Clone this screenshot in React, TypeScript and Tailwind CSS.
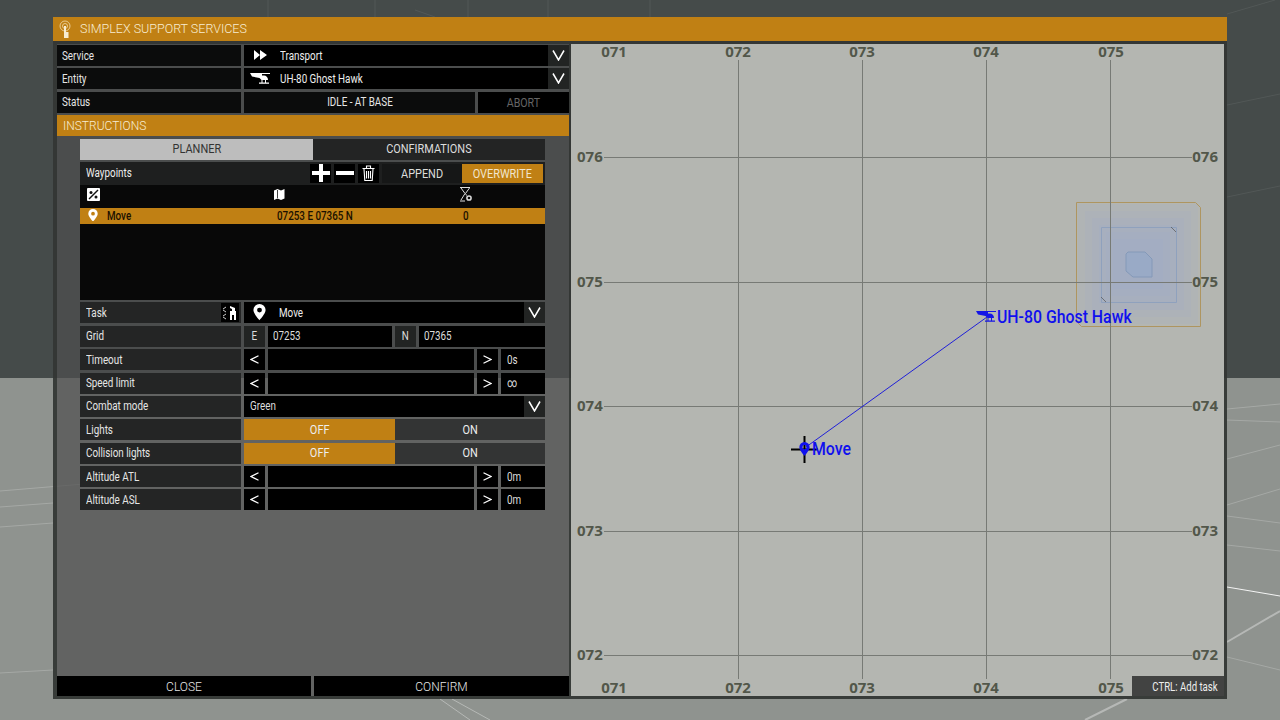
import type { ReactNode } from "react";

const orange = "bg-[#c08014]";
// the game font is condensed, Roboto gets squeezed to fit
const nl = "inline-block origin-left scale-x-[0.82] whitespace-nowrap";
const nc = "inline-block origin-center scale-x-[0.82] whitespace-nowrap";
const nu = "inline-block origin-center scale-x-[0.84] whitespace-nowrap";

function Pin({ color = "white", size = 14 }: { color?: string; size?: number }) {
  return (
    <svg width={size} height={size * 1.25} viewBox="0 0 16 20" className="block">
      <path fillRule="evenodd" fill={color} d="M8 0a7.500 7.500 0 0 0-7.500 7.500c0 4.500 7.500 12.500 7.500 12.500s7.500-8 7.500-12.500a7.500 7.500 0 0 0-7.500-7.500zm0 4.500a3 3 0 1 1 0 6a3 3 0 0 1 0-6z" />
    </svg>
  );
}

function Heli({ color = "white", className = "" }: { color?: string; className?: string }) {
  return (
    <svg width="20" height="11" viewBox="0 0 20 11" className={className}>
      <path fill={color} d="M0 0h20v1h-8v1.500h2c2 0 4 1.500 4 4.500h-6.500l-2-2l-7.500-1.500l-2-3.500zM9 9.500h10v1.200h-10z" />
      <path fill={color} d="M11.500 7h1v3h-1zM15 7h1v3h-1z" />
    </svg>
  );
}

function Chevron() {
  return (
    <svg width="13" height="11" viewBox="0 0 13 11">
      <path d="M1 .5l5.500 9.500l5.500-9.500" fill="none" stroke="white" strokeWidth="1.500" />
    </svg>
  );
}

function Arrow({ flip }: { flip?: boolean }) {
  return (
    <svg width="9" height="9" viewBox="0 0 9 9" className={flip ? "rotate-180" : ""}>
      <path d="M8.500 .8L1 4.500l7.500 3.700" fill="none" stroke="white" strokeWidth="1.200" />
    </svg>
  );
}

function DropBtn() {
  return (
    <div className="w-[21px] h-full bg-[#222423] flex items-center justify-center shrink-0">
      <Chevron />
    </div>
  );
}

function Label({ children }: { children: ReactNode }) {
  return (
    <div className="w-[161px] shrink-0 h-full flex items-center pl-[6px] text-[#e6e6e6] bg-[#242525]">
      <span className={nl}>{children}</span>
    </div>
  );
}

function TopLabel({ children }: { children: ReactNode }) {
  return (
    <div className="w-[184px] shrink-0 h-full flex items-center pl-[5px] text-[#e6e6e6] bg-[#0b0c0c]">
      <span className={nl}>{children}</span>
    </div>
  );
}

function SliderRow({ label, value }: { label: string; value: string }) {
  return (
    <div className="flex h-[21px] gap-[3px]">
      <Label>{label}</Label>
      <div className="w-[21px] bg-black flex items-center justify-center"><Arrow /></div>
      <div className="w-[206px] bg-black" />
      <div className="w-[21px] bg-black flex items-center justify-center"><Arrow flip /></div>
      <div className="flex-1 bg-black flex items-center pl-[6px] text-[#ddd]"><span className={nl}>{value}</span></div>
    </div>
  );
}

function Toggle({ label }: { label: string }) {
  return (
    <div className="flex h-[21px] gap-[3px]">
      <Label>{label}</Label>
      <div className="flex flex-1 text-[13px] text-[#eee]">
        <div className={`w-[151px] ${orange} flex items-center justify-center`}><span className={nu}>OFF</span></div>
        <div className="flex-1 bg-[#333434] flex items-center justify-center"><span className={nu}>ON</span></div>
      </div>
    </div>
  );
}

const xLabels = [
  { t: "071", x: 614 },
  { t: "072", x: 738 },
  { t: "073", x: 862 },
  { t: "074", x: 986 },
  { t: "075", x: 1111 },
];
const yLabels = [
  { t: "076", y: 157 },
  { t: "075", y: 282 },
  { t: "074", y: 406 },
  { t: "073", y: 531 },
  { t: "072", y: 655 },
];
const mapNum = "absolute text-[15px] font-bold leading-[20px] text-[#52574a]";

function GameMap() {
  return (
    <div className="relative w-[653px] h-[652px] bg-[#b4b6b1] font-['Noto_Sans',sans-serif]">
      <svg width="653" height="652" viewBox="571 44 653 652" className="absolute inset-0">
        {[60, 53, 46, 39, 32, 25].map((r) => (
          <rect key={r} x={1138 - r} y={264 - r} width={r * 2} height={r * 2} fill="#8fa8d4" fillOpacity="0.1" />
        ))}
        <path d="M1076.500 202.500h119l5 5v119h-119l-5-5z" fill="none" stroke="#ae9560" strokeWidth="1" />
        <path d="M1101.500 227.500h75v75h-75z" fill="none" stroke="#8fa1bd" strokeWidth="1" />
        <path d="M1171 227l5 5M1101 297l5 5" stroke="#555" strokeWidth="0.700" />
        <path d="M1128 252h17l7 7v18h-19l-7-6v-17z" fill="#92a8c8" fillOpacity="0.6" stroke="#8499b8" strokeWidth="1" />
        {[738, 862, 986, 1110].map((x) => (
          <line key={x} x1={x + 0.5} x2={x + 0.5} y1="60" y2="679" stroke="#777a75" strokeWidth="1" />
        ))}
        {[157, 282, 406, 531, 655].map((y) => (
          <line key={y} y1={y + 0.5} y2={y + 0.5} x1="604" x2="1192" stroke="#777a75" strokeWidth="1" />
        ))}
        <line x1="806" y1="447" x2="987" y2="317" stroke="#2020d8" strokeWidth="1" />
        <path d="M804.500 436v27M791 449.500h27" stroke="black" strokeWidth="2" />
      </svg>
      {xLabels.map((l) => (
        <div key={l.t}>
          <span className={`${mapNum} top-[-3px] w-[34px] ml-[-17px] text-center`} style={{ left: l.x - 571 }}>{l.t}</span>
          <span className={`${mapNum} top-[633px] w-[34px] ml-[-17px] text-center`} style={{ left: l.x - 571 }}>{l.t}</span>
        </div>
      ))}
      {yLabels.map((l) => (
        <div key={l.y}>
          <span className={`${mapNum} left-[6px]`} style={{ top: l.y - 44 - 11 }}>{l.t}</span>
          <span className={`${mapNum} right-[6px]`} style={{ top: l.y - 44 - 11 }}>{l.t}</span>
        </div>
      ))}
      <Heli color="#1414e6" className="absolute left-[405px] top-[267px]" />
      <span className="absolute left-[426px] top-[262px] text-[18px] leading-[22px] text-[#1010ee] font-['Roboto',sans-serif] font-medium whitespace-nowrap origin-left scale-x-[0.88]">UH-80 Ghost Hawk</span>
      <div className="absolute left-[228px] top-[398px]"><Pin color="#1010ee" size={11} /></div>
      <span className="absolute left-[241px] top-[394px] text-[18px] leading-[22px] text-[#1010ee] font-['Roboto',sans-serif] font-medium origin-left scale-x-[0.88]">Move</span>
      <div className="absolute right-0 bottom-0 w-[92px] h-[20px] bg-[#424342] flex items-center justify-end pr-[6px] pt-[1px] text-[12px] text-[#eee] font-['Roboto',sans-serif]">
        <span className="inline-block origin-right scale-x-[0.8] whitespace-nowrap">CTRL: Add task</span>
      </div>
    </div>
  );
}

function Planner() {
  return (
    <div className="ml-[23px] mr-[24px] flex flex-col gap-[2.400px]">
      <div className="flex h-[21px] text-[13px]">
        <div className="w-[233px] bg-[#bdbdbd] text-[#333] flex items-center justify-center"><span className={nu}>PLANNER</span></div>
        <div className="flex-1 bg-[#232424] text-[#ddd] flex items-center justify-center"><span className={nu}>CONFIRMATIONS</span></div>
      </div>
      <div className="flex flex-col">
        <div className="h-[23px] bg-[#1e1f1f] flex items-center pl-[6px] text-[#eee]">
          <span className={`${nl} flex-1`}>Waypoints</span>
          <div className="flex gap-[3px] items-center mr-[3px]">
            <div className="w-[21px] h-[19px] bg-black flex items-center justify-center">
              <svg width="18" height="18" viewBox="0 0 18 18"><path d="M7 0h4v7h7v4h-7v7h-4v-7h-7v-4h7z" fill="white" /></svg>
            </div>
            <div className="w-[21px] h-[19px] bg-black flex items-center justify-center">
              <svg width="18" height="4" viewBox="0 0 18 4"><rect width="18" height="4" fill="white" /></svg>
            </div>
            <div className="w-[21px] h-[19px] bg-black flex items-center justify-center">
              <svg width="13" height="16" viewBox="0 0 13 16">
                <path d="M.5 3.500h12M4.500 3V1h4v2M2 4l.8 11.500h7.400L11 4M4.500 6v7.500M6.500 6v7.500M8.500 6v7.500" fill="none" stroke="white" strokeWidth="1.100" />
              </svg>
            </div>
          </div>
          <div className="w-[80px] h-[19px] bg-[#161717] text-[13px] flex items-center justify-center text-[#ddd]"><span className={nu}>APPEND</span></div>
          <div className={`w-[81px] h-[19px] mr-[2px] ${orange} text-[13px] flex items-center justify-center text-[#f1e6cf]`}><span className={nu}>OVERWRITE</span></div>
        </div>
        <div className="h-[115px] bg-[#080808] flex flex-col">
          <div className="h-[23px] relative shrink-0">
            <svg width="14" height="14" viewBox="0 0 14 14" className="absolute left-[7px] top-[3px]">
              <rect width="13" height="13" rx="1" fill="white" />
              <path d="M2 11L11 2" stroke="#111" strokeWidth="1.500" />
              <circle cx="4" cy="4.500" r="1.500" fill="#111" />
              <circle cx="9" cy="9" r="1.500" fill="#111" />
            </svg>
            <svg width="11" height="11" viewBox="0 0 11 11" className="absolute left-[194px] top-[4px]">
              <path d="M0 1.500L3.500 0L7 1.500L10.500 0V9.500L7 11L3.500 9.500L0 11z" fill="white" />
              <path d="M3.500 1v8" stroke="#111" strokeWidth="0.800" />
            </svg>
            <svg width="13" height="15" viewBox="0 0 13 15" className="absolute left-[379px] top-[2px]">
              <path d="M1 .5h10M1 14h5M2 1l4 5.500L2 13M10.500 1L6.500 6.500L7.500 8.500" fill="none" stroke="#ddd" strokeWidth="1" />
              <circle cx="10" cy="11" r="2.100" fill="none" stroke="#ddd" strokeWidth="1.500" />
            </svg>
          </div>
          <div className={`h-[16px] ${orange} relative text-[#1a1000] shrink-0 flex items-center`}>
            <div className="absolute left-[8px] top-[1px]"><Pin size={10} /></div>
            <span className={`absolute left-[27px] ${nl} font-medium`}>Move</span>
            <span className={`absolute left-[197px] ${nl} font-medium`}>07253 E 07365 N</span>
            <span className={`absolute left-[383px] ${nl} font-medium`}>0</span>
          </div>
        </div>
      </div>
      <div className="flex h-[21px] gap-[3px]">
        <div className="w-[161px] shrink-0 h-full flex items-center pl-[6px] text-[#e6e6e6] bg-[#242525] relative">
          <span className={nl}>Task</span>
          <div className="absolute right-[2px] top-[1px] w-[18px] h-[19px] bg-black flex items-center justify-center">
            <svg width="14" height="15" viewBox="0 0 14 15">
              <path d="M7 1l5 2v3h1v9h-2v-5h-2v5h-2v-9h2v-2l-2-1z" fill="white" />
              <path d="M0 4l3-2M0 5l3 2M0 11l3-2M0 12l3 2" fill="none" stroke="white" strokeWidth="0.800" />
            </svg>
          </div>
        </div>
        <div className="flex-1 bg-black flex items-center relative text-[#eee]">
          <div className="absolute left-[9px] top-[2px]"><Pin size={13} /></div>
          <span className={`${nl} ml-[35px] flex-1`}>Move</span>
          <DropBtn />
        </div>
      </div>
      <div className="flex h-[21px] gap-[3px]">
        <Label>Grid</Label>
        <div className="w-[21px] bg-[#222423] flex items-center justify-center text-[#ddd]"><span className={nc}>E</span></div>
        <div className="w-[124px] bg-black flex items-center pl-[5px] text-[#ddd]"><span className={nl}>07253</span></div>
        <div className="w-[21px] bg-[#222423] flex items-center justify-center text-[#ddd]"><span className={nc}>N</span></div>
        <div className="flex-1 bg-black flex items-center pl-[5px] text-[#ddd]"><span className={nl}>07365</span></div>
      </div>
      <SliderRow label="Timeout" value="0s" />
      <SliderRow label="Speed limit" value="∞" />
      <div className="flex h-[21px] gap-[3px]">
        <Label>Combat mode</Label>
        <div className="flex-1 bg-black flex items-center pl-[6px] text-[#ddd]">
          <span className={`${nl} flex-1`}>Green</span>
          <DropBtn />
        </div>
      </div>
      <Toggle label="Lights" />
      <Toggle label="Collision lights" />
      <SliderRow label="Altitude ATL" value="0m" />
      <SliderRow label="Altitude ASL" value="0m" />
    </div>
  );
}

function Sidebar() {
  return (
    <div className="w-[512px] shrink-0 flex flex-col gap-[2.400px] pt-[1px] font-['Roboto',sans-serif]">
      <div className="flex h-[21px]">
        <TopLabel>Service</TopLabel>
        <div className="flex-1 ml-[3px] bg-black flex items-center relative text-[#eee]">
          <svg width="13" height="10" viewBox="0 0 13 10" className="absolute left-[10px] top-[5px]">
            <path d="M0 0l6 5l-6 5zM6 0l7 5l-7 5z" fill="white" />
          </svg>
          <span className={`${nl} ml-[36px] flex-1`}>Transport</span>
          <DropBtn />
        </div>
      </div>
      <div className="flex h-[21px]">
        <TopLabel>Entity</TopLabel>
        <div className="flex-1 ml-[3px] bg-black flex items-center relative text-[#eee]">
          <Heli className="absolute left-[6px] top-[5px]" />
          <span className={`${nl} ml-[36px] flex-1`}>UH-80 Ghost Hawk</span>
          <DropBtn />
        </div>
      </div>
      <div className="flex h-[21px]">
        <TopLabel>Status</TopLabel>
        <div className="w-[231px] ml-[3px] bg-[#0b0c0c] flex items-center justify-center text-[#e6e6e6]"><span className={nc}>IDLE - AT BASE</span></div>
        <div className="flex-1 ml-[3px] bg-black flex items-center justify-center text-[13px] text-[#666]"><span className={nc}>ABORT</span></div>
      </div>
      <div className={`h-[21px] ${orange} flex items-center pl-[6px] text-[12px] font-light text-[#f7ecd2]`}>INSTRUCTIONS</div>
      <Planner />
      <div className="mt-auto flex gap-[3px] h-[20px] text-[12px] font-light text-[#e6e6e6]">
        <div className="w-[254px] bg-black flex items-center justify-center pt-[1px]">CLOSE</div>
        <div className="flex-1 bg-black flex items-center justify-center pt-[1px]">CONFIRM</div>
      </div>
    </div>
  );
}

export default function App() {
  return (
    <div className="relative w-[1280px] h-[720px] overflow-hidden bg-[#8f938f] text-[12px] pl-[53px] pt-[17px]">
      <div className="absolute inset-x-0 top-0 h-[378px] bg-[#454b4a]" />
      <svg width="1280" height="720" className="absolute inset-0">
        <path d="M0 491l120-10M0 507l53-4M0 527l53-4M0 673l53-3M1227 505l53-16M1227 459l53-14M1227 409l53-5M1227 420l53 2M1227 545l53 6M1227 516l53 7M1227 657l53 13" stroke="#ffffff" strokeOpacity="0.2" fill="none" />
        <path d="M1227 587l53 9" stroke="#ffffff" strokeOpacity="0.9" fill="none" />
        <path d="M1227 642l53-31M1085 720l42-21" stroke="#ffffff" strokeOpacity="0.35" strokeWidth="2" fill="none" />
        <path d="M268 0v17M375 0v17M468 0v17M548 0v17M650 0v17M415 10l20 7M1227 14l48-14M1227 105l53-11M1227 197l53-11" stroke="#ffffff" strokeOpacity="0.07" fill="none" />
        <path d="M440 699l30 21M452 699l38 21" stroke="#ffffff" strokeOpacity="0.35" fill="none" />
      </svg>

      <div className="relative w-[1174px] h-[682px] flex flex-col">
        <div className={`h-[24px] ${orange} flex items-center relative shrink-0`}>
          <svg width="14" height="19" viewBox="0 0 14 19" className="absolute left-[6px] top-[3px]">
            <circle cx="6" cy="6" r="5" fill="none" stroke="#f1dcae" strokeWidth="0.800" />
            <circle cx="6" cy="6" r="2.500" fill="none" stroke="#f1dcae" strokeWidth="0.800" />
            <path d="M5 6h2v6h2.500v6h-4.500z" fill="#f7ecd2" />
          </svg>
          <span className="ml-[27px] text-[12.500px] text-[#f7ecd2] font-['Roboto',sans-serif] font-light">SIMPLEX SUPPORT SERVICES</span>
        </div>
        <div className="flex-1 flex bg-[#4e4e4e]/70 border-b-[3px] border-r-[3px] border-l-[4px] border-t-[3.500px] border-[#2e3230]/80 min-h-0">
          <Sidebar />
          <div className="w-[655px] border-l-[2px] border-[#2e3230]/80 shrink-0"><GameMap /></div>
        </div>
      </div>
    </div>
  );
}
